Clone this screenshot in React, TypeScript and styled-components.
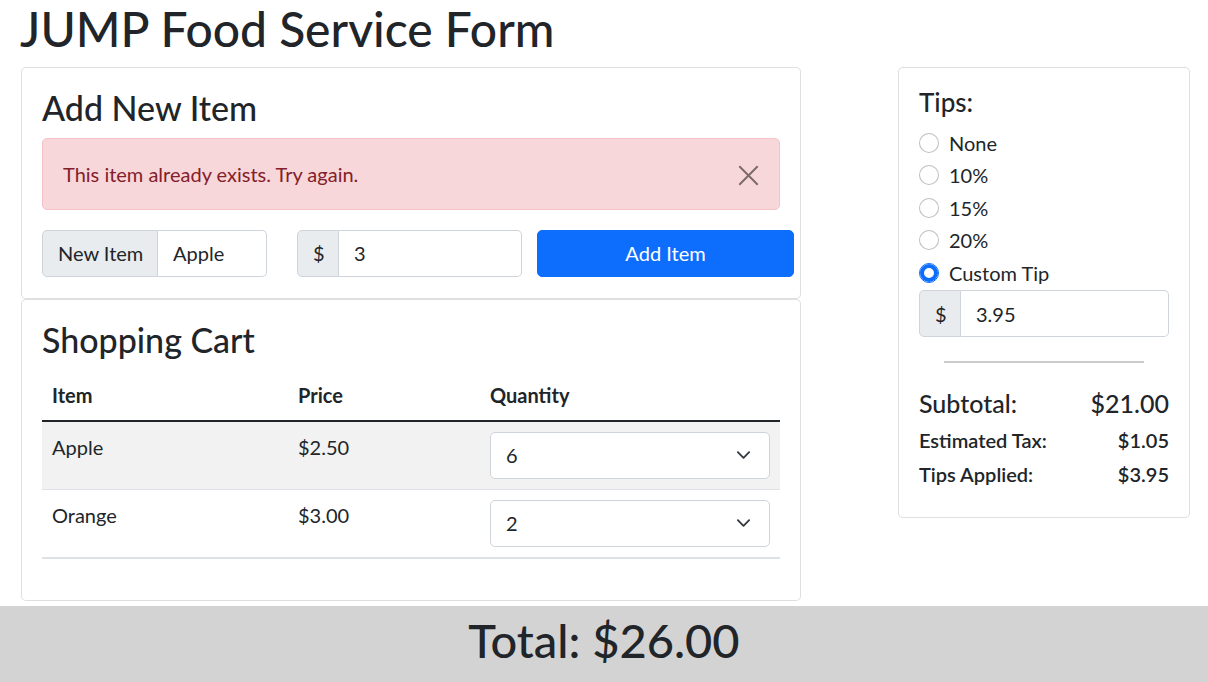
import React from "react";
import styled, { createGlobalStyle } from "styled-components";

const GlobalStyle = createGlobalStyle`
  * { box-sizing: border-box; }
  html, body { margin: 0; padding: 0; background: #fff; }
  body {
    font-family: Lato, "Liberation Sans", sans-serif;
    font-size: 20px;
    line-height: 30px;
    color: #212529;
  }
`;

const Page = styled.div`
  display: flex;
  flex-direction: column;
  width: 1208px;
`;

const Title = styled.h1`
  margin: 0 0 9.4px;
  padding-left: 20px;
  font-size: 48px;
  font-weight: 500;
  line-height: 57.6px;
`;

const Main = styled.main`
  display: flex;
  justify-content: space-between;
  align-items: flex-start;
  padding: 0 18px 0 21px;
`;

const LeftColumn = styled.div`
  width: 780px;
  display: flex;
  flex-direction: column;
`;

const Card = styled.section<{ $width?: number }>`
  width: ${(p) => (p.$width ? `${p.$width}px` : "100%")};
  background: #fff;
  border: 1px solid rgba(0, 0, 0, 0.125);
  border-radius: 5px;
  padding: 20px 20px 21px;
`;

const CardTitle = styled.h3`
  margin: 0 0 10.4px;
  font-size: 34px;
  font-weight: 500;
  line-height: 39.6px;
`;

const Alert = styled.div`
  position: relative;
  margin-bottom: 20px;
  padding: 20px 60px 20px 20px;
  background: #f8d7da;
  border: 1px solid #f5c2c7;
  border-radius: 5px;
  color: #842029;
  line-height: 30px;
`;

const CloseButton = styled.button`
  position: absolute;
  top: 26px;
  right: 20px;
  width: 21px;
  height: 21px;
  padding: 0;
  border: 0;
  background: transparent;
  opacity: 0.5;
  cursor: pointer;
  display: flex;
`;

const FormRow = styled.div`
  display: flex;
  align-items: stretch;
`;

const InputGroup = styled.div<{ $width?: number; $gap?: number }>`
  display: flex;
  flex: none;
  width: ${(p) => (p.$width ? `${p.$width}px` : "100%")};
  margin-right: ${(p) => p.$gap ?? 0}px;
  height: 47px;
`;

const Addon = styled.span<{ $width: number }>`
  flex: none;
  width: ${(p) => p.$width}px;
  padding: 7.5px 15px;
  background: #e9ecef;
  border: 1px solid #ced4da;
  border-radius: 5px 0 0 5px;
  white-space: nowrap;
  line-height: 30px;
  color: #212529;
`;

const Field = styled.input`
  flex: 1;
  min-width: 0;
  padding: 7.5px 15px;
  border: 1px solid #ced4da;
  border-left: 0;
  border-radius: 0 5px 5px 0;
  font: inherit;
  line-height: 30px;
  color: #212529;
  background: #fff;
  outline: none;
`;

const PrimaryButton = styled.button`
  flex: none;
  width: 257px;
  height: 47px;
  background: #0d6efd;
  border: 1px solid #0d6efd;
  border-radius: 5px;
  color: #fff;
  font: inherit;
  line-height: 30px;
  cursor: pointer;
`;

const Table = styled.table`
  width: 100%;
  border-collapse: collapse;
  margin-bottom: 20px;
`;

const Th = styled.th<{ $width?: number }>`
  width: ${(p) => (p.$width ? `${p.$width}px` : "auto")};
  padding: 10px;
  text-align: left;
  font-weight: 700;
  line-height: 30px;
  border-bottom: 2px solid #212529;
`;

const Tr = styled.tr<{ $striped?: boolean; $last?: boolean }>`
  background: ${(p) => (p.$striped ? "#f2f2f2" : "#fff")};
  border-bottom: ${(p) => (p.$last ? "2px" : "1px")} solid #dee2e6;
`;

const Td = styled.td`
  padding: 10px;
  vertical-align: top;
  line-height: 30px;
`;

const SelectWrap = styled.div`
  position: relative;
`;

const Select = styled.select`
  display: block;
  width: 100%;
  height: 47px;
  padding: 7.5px 45px 7.5px 15px;
  border: 1px solid #ced4da;
  border-radius: 5px;
  background: #fff;
  appearance: none;
  font: inherit;
  line-height: 30px;
  color: #212529;
  outline: none;
`;

const Chevron = styled.svg`
  position: absolute;
  right: 19px;
  top: 50%;
  transform: translateY(-50%);
  pointer-events: none;
`;

const TipsTitle = styled.h4`
  margin: 0 0 12px;
  font-size: 26px;
  font-weight: 500;
  line-height: 28px;
`;

const RadioRow = styled.label`
  display: flex;
  align-items: flex-start;
  min-height: 30px;
  margin-bottom: 2.5px;
  line-height: 30px;
  cursor: pointer;
`;

const Radio = styled.input`
  appearance: none;
  flex: none;
  width: 20px;
  height: 20px;
  margin: 5px 10px 0 0;
  border: 1px solid rgba(0, 0, 0, 0.25);
  border-radius: 50%;
  background: #fff;
  &:checked {
    border-color: #0d6efd;
    box-shadow: inset 0 0 0 4px #0d6efd;
  }
`;

const Divider = styled.hr`
  width: 80%;
  margin: 24px auto 25px;
  border: 0;
  border-top: 2px solid #cbcbcb;
`;

const SummaryRow = styled.div<{ $size: number; $weight: number; $line: number }>`
  display: flex;
  justify-content: space-between;
  margin-bottom: 10px;
  font-size: ${(p) => p.$size}px;
  font-weight: ${(p) => p.$weight};
  line-height: ${(p) => p.$line}px;
`;

const TotalBar = styled.footer`
  margin-top: 5px;
  padding: 5px 0 14px;
  background: #d3d3d3;
  text-align: center;
  font-size: 47px;
  font-weight: 500;
  line-height: 58px;
`;

const items = [
  { name: "Apple", price: "$2.50", qty: 6 },
  { name: "Orange", price: "$3.00", qty: 2 },
];

const tips = ["None", "10%", "15%", "20%", "Custom Tip"];

const noop = () => {};

export default function App() {
  return (
    <Page>
      <GlobalStyle />
      <Title>JUMP Food Service Form</Title>
      <Main>
        <LeftColumn>
          <Card>
            <CardTitle>Add New Item</CardTitle>
            <Alert role="alert">
              This item already exists. Try again.
              <CloseButton aria-label="Close">
                <svg width="21" height="21" viewBox="0 0 16 16">
                  <path d="M1 1L15 15M15 1L1 15" stroke="#000" strokeWidth="1.5" fill="none" />
                </svg>
              </CloseButton>
            </Alert>
            <FormRow>
              <InputGroup $width={225} $gap={30}>
                <Addon $width={116}>New Item</Addon>
                <Field defaultValue="Apple" />
              </InputGroup>
              <InputGroup $width={225} $gap={15}>
                <Addon $width={42}>$</Addon>
                <Field defaultValue="3" />
              </InputGroup>
              <PrimaryButton>Add Item</PrimaryButton>
            </FormRow>
          </Card>
          <Card>
            <CardTitle>Shopping Cart</CardTitle>
            <Table>
              <thead>
                <tr>
                  <Th $width={246}>Item</Th>
                  <Th $width={192}>Price</Th>
                  <Th>Quantity</Th>
                </tr>
              </thead>
              <tbody>
                {items.map((it, i) => (
                  <Tr key={it.name} $striped={i % 2 === 0} $last={i === items.length - 1}>
                    <Td>{it.name}</Td>
                    <Td>{it.price}</Td>
                    <Td>
                      <SelectWrap>
                        <Select defaultValue={String(it.qty)}>
                          {Array.from({ length: 10 }, (_, n) => (
                            <option key={n} value={String(n + 1)}>
                              {n + 1}
                            </option>
                          ))}
                        </Select>
                        <Chevron width="15" height="15" viewBox="0 0 16 16">
                          <path d="M2 5l6 6 6-6" stroke="#343a40" strokeWidth="2" fill="none" strokeLinecap="round" strokeLinejoin="round" />
                        </Chevron>
                      </SelectWrap>
                    </Td>
                  </Tr>
                ))}
              </tbody>
            </Table>
          </Card>
        </LeftColumn>
        <Card $width={292}>
          <TipsTitle>Tips:</TipsTitle>
          {tips.map((t) => (
            <RadioRow key={t}>
              <Radio type="radio" name="tip" checked={t === "Custom Tip"} onChange={noop} />
              {t}
            </RadioRow>
          ))}
          <InputGroup>
            <Addon $width={42}>$</Addon>
            <Field defaultValue="3.95" />
          </InputGroup>
          <Divider />
          <SummaryRow $size={25} $weight={500} $line={30}>
            <span>Subtotal:</span>
            <span>$21.00</span>
          </SummaryRow>
          <SummaryRow $size={20} $weight={600} $line={24}>
            <span>Estimated Tax:</span>
            <span>$1.05</span>
          </SummaryRow>
          <SummaryRow $size={20} $weight={600} $line={24}>
            <span>Tips Applied:</span>
            <span>$3.95</span>
          </SummaryRow>
        </Card>
      </Main>
      <TotalBar>Total: $26.00</TotalBar>
    </Page>
  );
}
